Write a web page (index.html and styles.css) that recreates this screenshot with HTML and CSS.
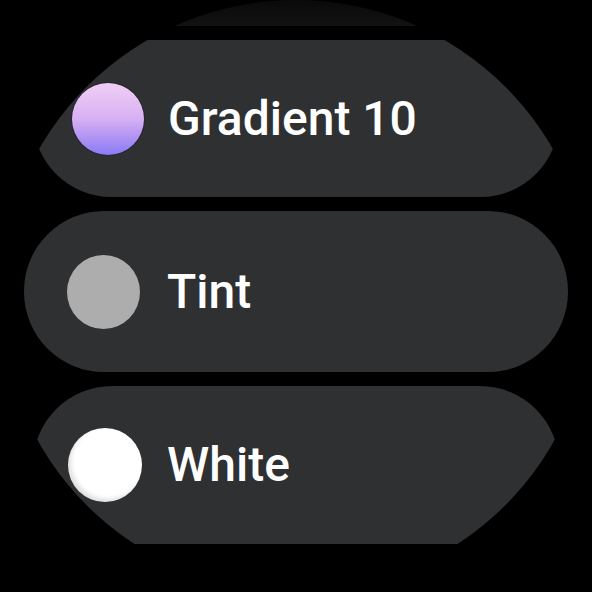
FILE: index.html
```html
<!DOCTYPE html>
<html lang="en">
<head>
    <meta charset="UTF-8">
    <meta name="viewport" content="width=device-width, initial-scale=1.0">
    <title>Colour picker</title>
    <link rel="stylesheet" href="styles.css">
</head>
<body>
    <!-- Round watch screen -->
    <div class="screen">
        <div class="chip-list">
            <!-- item scrolled off the top, only its edge shows -->
            <div class="chip chip-faded"></div>

            <div class="chip chip-edge chip-first">
                <span class="swatch swatch-gradient"></span>
                <span class="chip-label">Gradient 10</span>
            </div>

            <div class="chip chip-center">
                <span class="swatch swatch-tint"></span>
                <span class="chip-label">Tint</span>
            </div>

            <div class="chip chip-edge chip-last">
                <span class="swatch swatch-white"></span>
                <span class="chip-label">White</span>
            </div>
        </div>
    </div>
</body>
</html>
```

FILE: styles.css
```css
/* Basic Reset */
body, html {
    margin: 0;
    padding: 0;
    background: #000;
    font-family: Roboto, "Noto Sans", sans-serif;
}

/* Round screen clips everything */
.screen {
    width: 592px;
    height: 592px;
    border-radius: 50%;
    overflow: hidden;
    background: #000;
}

.chip-list {
    display: flex;
    flex-direction: column;
    align-items: center;
    gap: 14px;
    margin-top: -132px;
}

/* Chip */
.chip {
    display: flex;
    align-items: center;
    box-sizing: border-box;
    background: #2f3032;
    border-radius: 80px;
    color: #fff;
}

.chip-faded {
    width: 500px;
    height: 158px;
    background: linear-gradient(to bottom, #050505 75%, #121213);
}

.chip-edge {
    width: 526px;
    height: 157px;
    border-radius: 79px;
}

.chip-first {
    padding-left: 39px;
}

.chip-last {
    height: 158px;
    padding-left: 35px;
}

.chip-center {
    width: 544px;
    height: 161px;
    padding-left: 43px;
}

.chip-label {
    font-size: 48px;
    font-weight: 500;
    line-height: 1;
}

/* Colour swatches */
.swatch {
    flex: none;
    border-radius: 50%;
}

.swatch-gradient {
    width: 72px;
    height: 72px;
    margin-right: 24px;
    background: linear-gradient(to bottom, #f0cff4, #d7b0f3 50%, #8a7af4);
    box-shadow: 0 0 0 1px rgba(40, 20, 60, 0.5);
}

.swatch-tint {
    width: 73px;
    height: 74px;
    margin-right: 27px;
    background: #adadad;
}

.swatch-white {
    width: 74px;
    height: 74px;
    margin-right: 25px;
    background: #fff;
    box-shadow: inset 3px -3px 4px rgba(0, 0, 0, 0.12);
}
```
